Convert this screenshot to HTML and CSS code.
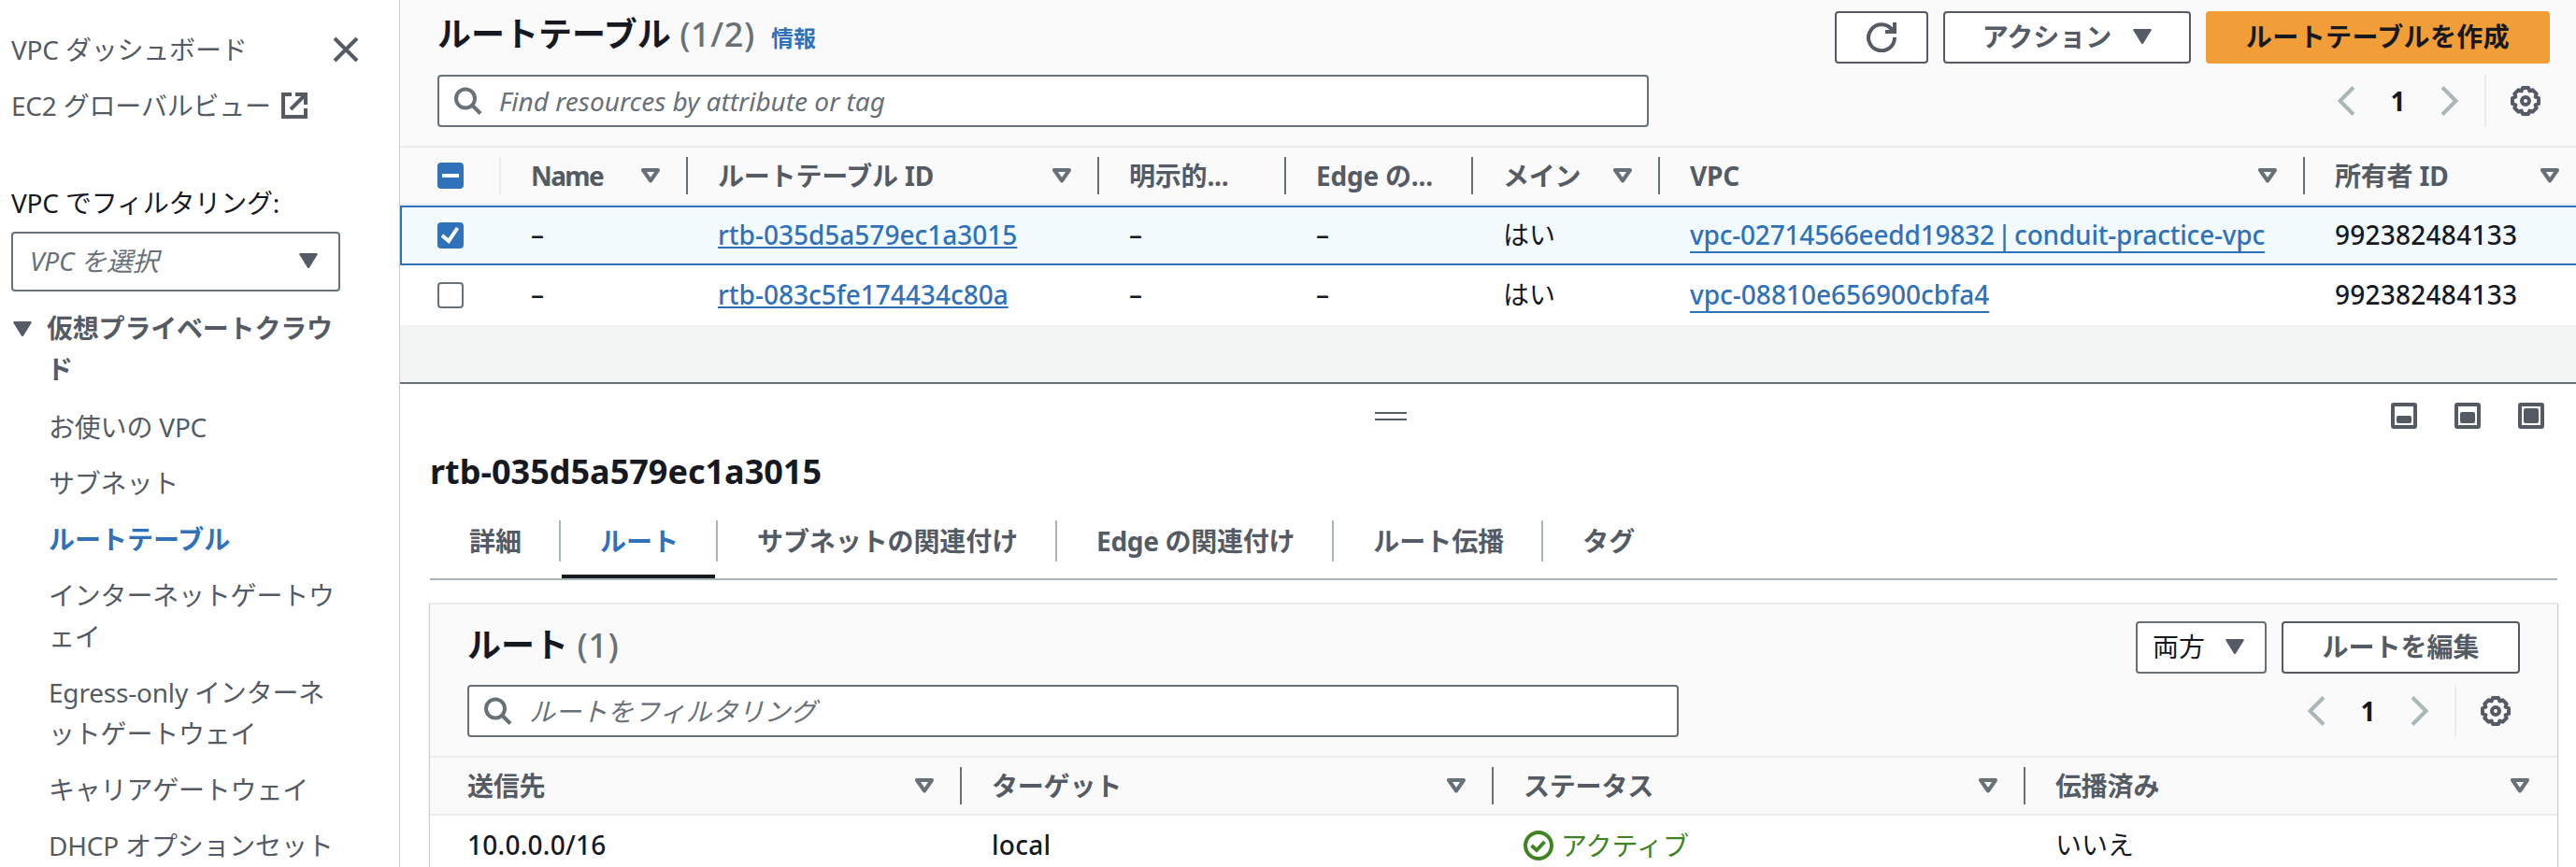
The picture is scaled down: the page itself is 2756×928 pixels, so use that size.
FILE: index.html
```html
<!DOCTYPE html>
<html lang="ja">
<head>
    <meta charset="utf-8">
    <title>ルートテーブル | VPC</title>
    <link rel="stylesheet" href="styles.css">
</head>
<body>
    <svg class="defs" width="0" height="0">
        <symbol id="i-down" viewBox="0 0 20 16"><path d="M1 0h18l1 1L11 15.4q-1 1.2-2 0L0 1z" fill="currentColor"/></symbol>
        <symbol id="i-sort" viewBox="0 0 20 16"><path d="M2 2h16l-8 11.5z" fill="none" stroke="currentColor" stroke-width="4" stroke-linejoin="round"/></symbol>
        <symbol id="i-search" viewBox="0 0 30 30"><circle cx="12" cy="12.500" r="10" fill="none" stroke="currentColor" stroke-width="4"/><path d="M19 19.500L28 28.500" stroke="currentColor" stroke-width="4"/></symbol>
        <symbol id="i-prev" viewBox="0 0 20 32"><path d="M18 1.500L3.500 16 18 30.500" fill="none" stroke="currentColor" stroke-width="4"/></symbol>
        <symbol id="i-next" viewBox="0 0 20 32"><path d="M2 1.500L16.500 16 2 30.500" fill="none" stroke="currentColor" stroke-width="4"/></symbol>
        <symbol id="i-gear" viewBox="0 0 32 32">
            <path d="M13 2h6l1.400 3.400 3.200-1.100 4.100 4.100-1.100 3.200L30 13v6l-3.400 1.400 1.100 3.200-4.100 4.100-3.200-1.100L19 30h-6l-1.400-3.400-3.200 1.100-4.100-4.100 1.100-3.200L2 19v-6l3.400-1.400-1.100-3.200 4.100-4.100 3.200 1.100z" fill="none" stroke="currentColor" stroke-width="4" stroke-linejoin="round"/>
            <circle cx="16" cy="16" r="4" fill="none" stroke="currentColor" stroke-width="4"/>
        </symbol>
    </svg>

    <nav class="sidebar">
        <div class="nav-top">
            <a class="nav-link">VPC ダッシュボード</a>
            <svg class="close" viewBox="0 0 28 28"><path d="M2 2l24 24M26 2L2 26" stroke="currentColor" stroke-width="4"/></svg>
        </div>
        <a class="nav-link">EC2 グローバルビュー
            <svg class="external" viewBox="0 0 28 28"><path d="M11 2H2v24h24V17M15 2h11v11M26 2L10 18" fill="none" stroke="currentColor" stroke-width="4"/></svg>
        </a>
        <div class="filter-label">VPC でフィルタリング:</div>
        <div class="select vpc-select"><i>VPC を選択</i><svg class="tri"><use href="#i-down"/></svg></div>
        <div class="nav-section"><svg class="tri"><use href="#i-down"/></svg><b>仮想プライベートクラウド</b></div>
        <ul class="nav-list">
            <li>お使いの VPC</li>
            <li>サブネット</li>
            <li class="active">ルートテーブル</li>
            <li>インターネットゲートウェイ</li>
            <li>Egress-only インターネットゲートウェイ</li>
            <li>キャリアゲートウェイ</li>
            <li>DHCP オプションセット</li>
        </ul>
    </nav>

    <main class="main">
        <!-- ルートテーブル一覧 -->
        <section class="list">
            <div class="title-row">
                <h1>ルートテーブル <span class="count">(1/2)</span> <a class="info">情報</a></h1>
                <div class="actions">
                    <button class="btn refresh"><svg viewBox="0 0 32 32"><path d="M30 0v10H20M28 9A14 14 0 1 0 30 16" fill="none" stroke="currentColor" stroke-width="4"/></svg></button>
                    <button class="btn menu">アクション <svg class="tri"><use href="#i-down"/></svg></button>
                    <button class="btn primary">ルートテーブルを作成</button>
                </div>
            </div>
            <div class="tools">
                <div class="search"><svg><use href="#i-search"/></svg><i>Find resources by attribute or tag</i></div>
                <div class="pager">
                    <svg class="arrow"><use href="#i-prev"/></svg><b>1</b><svg class="arrow"><use href="#i-next"/></svg>
                    <span class="settings"><svg><use href="#i-gear"/></svg></span>
                </div>
            </div>
            <div class="table tables-table">
                <div class="row head">
                    <div class="cell check"><span class="box on"><svg viewBox="0 0 28 28"><path d="M5 14h18" stroke="#fff" stroke-width="4"/></svg></span></div>
                    <div class="cell name">Name<svg class="sort"><use href="#i-sort"/></svg></div>
                    <div class="cell">ルートテーブル ID<svg class="sort"><use href="#i-sort"/></svg></div>
                    <div class="cell">明示的...</div>
                    <div class="cell">Edge の...</div>
                    <div class="cell">メイン<svg class="sort"><use href="#i-sort"/></svg></div>
                    <div class="cell">VPC<svg class="sort"><use href="#i-sort"/></svg></div>
                    <div class="cell">所有者 ID<svg class="sort"><use href="#i-sort"/></svg></div>
                </div>
                <div class="row selected">
                    <div class="cell check"><span class="box on"><svg viewBox="0 0 28 28"><path d="M5 14l7 6L21.500 6" fill="none" stroke="#fff" stroke-width="4"/></svg></span></div>
                    <div class="cell num">–</div>
                    <div class="cell"><a class="link">rtb-035d5a579ec1a3015</a></div>
                    <div class="cell num">–</div>
                    <div class="cell num">–</div>
                    <div class="cell">はい</div>
                    <div class="cell"><a class="link vpc named">vpc-02714566eedd19832 | conduit-practice-vpc</a></div>
                    <div class="cell num">992382484133</div>
                </div>
                <div class="row">
                    <div class="cell check"><span class="box"></span></div>
                    <div class="cell num">–</div>
                    <div class="cell"><a class="link">rtb-083c5fe174434c80a</a></div>
                    <div class="cell num">–</div>
                    <div class="cell num">–</div>
                    <div class="cell">はい</div>
                    <div class="cell"><a class="link vpc">vpc-08810e656900cbfa4</a></div>
                    <div class="cell num">992382484133</div>
                </div>
            </div>
        </section>

        <!-- 分割パネル -->
        <section class="panel">
            <div class="panel-bar">
                <span class="handle"></span>
                <div class="sizes">
                    <svg viewBox="0 0 28 28"><rect x="2" y="2" width="24" height="24" rx="1"/><rect class="fill" x="6" y="14" width="16" height="8" rx="2"/></svg>
                    <svg viewBox="0 0 28 28"><rect x="2" y="2" width="24" height="24" rx="1"/><rect class="fill" x="6" y="10" width="16" height="12" rx="2"/></svg>
                    <svg viewBox="0 0 28 28"><rect x="2" y="2" width="24" height="24" rx="1"/><rect class="fill" x="6" y="6" width="16" height="16" rx="2"/></svg>
                </div>
            </div>
            <h2>rtb-035d5a579ec1a3015</h2>
            <div class="tabs">
                <div class="tab">詳細</div>
                <div class="tab current">ルート</div>
                <div class="tab">サブネットの関連付け</div>
                <div class="tab">Edge の関連付け</div>
                <div class="tab">ルート伝播</div>
                <div class="tab">タグ</div>
            </div>
            <div class="card">
                <div class="title-row">
                    <h1>ルート <span class="count">(1)</span></h1>
                    <div class="actions">
                        <div class="select both">両方<svg class="tri"><use href="#i-down"/></svg></div>
                        <button class="btn edit">ルートを編集</button>
                    </div>
                </div>
                <div class="tools">
                    <div class="search"><svg><use href="#i-search"/></svg><i>ルートをフィルタリング</i></div>
                    <div class="pager">
                        <svg class="arrow"><use href="#i-prev"/></svg><b>1</b><svg class="arrow"><use href="#i-next"/></svg>
                        <span class="settings"><svg><use href="#i-gear"/></svg></span>
                    </div>
                </div>
                <div class="table routes-table">
                    <div class="row head">
                        <div class="cell">送信先<svg class="sort"><use href="#i-sort"/></svg></div>
                        <div class="cell">ターゲット<svg class="sort"><use href="#i-sort"/></svg></div>
                        <div class="cell">ステータス<svg class="sort"><use href="#i-sort"/></svg></div>
                        <div class="cell">伝播済み<svg class="sort"><use href="#i-sort"/></svg></div>
                    </div>
                    <div class="row">
                        <div class="cell num">10.0.0.0/16</div>
                        <div class="cell num">local</div>
                        <div class="cell status"><svg viewBox="0 0 32 32"><circle cx="16" cy="16" r="14" fill="none" stroke="currentColor" stroke-width="4"/><path d="M8.500 16l5.500 5 8.500-9" fill="none" stroke="currentColor" stroke-width="4"/></svg>アクティブ</div>
                        <div class="cell">いいえ</div>
                    </div>
                </div>
            </div>
        </section>
    </main>
</body>
</html>
```

FILE: styles.css
```css
* {
    box-sizing: border-box;
}
body {
    margin: 0;
    height: 928px;
    overflow: hidden;
    display: flex;
    font-family: "Noto Sans", "Noto Sans CJK JP", sans-serif;
    font-size: 28px;
    line-height: 44px;
    color: #16191f;
    background: #fff;
}
.defs {
    position: absolute;
}
svg {
    display: block;
    flex: none;
}
.tri, .sort {
    width: 20px;
    height: 16px;
    color: #545b64;
}

/* サイドバー */
.sidebar {
    width: 428px;
    flex: none;
    padding: 31px 64px 0 12px;
    color: #545b64;
    letter-spacing: -0.2px;
}
.nav-top {
    display: flex;
    justify-content: space-between;
    align-items: center;
    margin-right: -20px;
    margin-bottom: 16px;
}
.close {
    width: 28px;
    height: 28px;
}
.nav-link {
    display: flex;
    align-items: center;
    white-space: nowrap;
}
.external {
    width: 28px;
    height: 28px;
    margin-left: 11px;
}
.filter-label {
    margin-top: 60px;
    color: #16191f;
}
.select {
    display: flex;
    align-items: center;
    justify-content: space-between;
    border: 2px solid #687078;
    border-radius: 4px;
    background: #fff;
}
.vpc-select {
    height: 64px;
    margin-top: 9px;
    padding: 0 22px 2px 18px;
    color: #687078;
}
.nav-section {
    display: flex;
    margin-top: 17px;
    padding-left: 2px;
}
.nav-section .tri {
    margin: 15px 16px 0 0;
}
.nav-list {
    list-style: none;
    margin: 18px 0 0;
    padding: 0 0 0 40px;
}
.nav-list li {
    margin-bottom: 16px;
    margin-right: -10px;
}
.nav-list .active {
    color: #2f72b9;
    font-weight: bold;
    letter-spacing: 0;
}

/* 一覧 */
.main {
    flex: 1;
    min-width: 0;
    display: flex;
    flex-direction: column;
    background: #f2f3f3;
    box-shadow: 0 0 0 1px #c8d0d0;
}
.list {
    background: #fafafa;
    padding-top: 12px;
}
.title-row, .tools {
    display: flex;
    justify-content: space-between;
    padding: 0 28px 0 40px;
}
h1 {
    margin: 0;
    font-size: 36px;
    line-height: 50px;
}
.count {
    font-weight: 500;
    letter-spacing: 0.6px;
    color: #687078;
}
.info {
    margin-left: 8px;
    font-size: 24px;
    color: #2f72b9;
}
.actions {
    display: flex;
    gap: 16px;
}
.btn {
    display: flex;
    align-items: center;
    justify-content: center;
    height: 56px;
    padding: 0 0 2px;
    border: 2px solid #545b64;
    border-radius: 4px;
    background: #fff;
    color: #545b64;
    font: bold 28px/44px "Noto Sans", "Noto Sans CJK JP", sans-serif;
}
.refresh {
    width: 100px;
    padding: 0;
}
.refresh svg {
    width: 32px;
    height: 32px;
}
.menu {
    width: 265px;
    gap: 23px;
}
.primary {
    width: 368px;
    border-color: #f19e38;
    background: #f19e38;
    color: #16191f;
    letter-spacing: 0.4px;
}
.tools {
    margin-top: 12px;
    padding-bottom: 20px;
}
.search {
    display: flex;
    align-items: center;
    width: 1296px;
    height: 56px;
    padding: 0 16px;
    gap: 18px;
    border: 2px solid #687078;
    border-radius: 4px;
    background: #fff;
    color: #687078;
}
.search svg {
    width: 30px;
    height: 30px;
}
.pager {
    display: flex;
    align-items: center;
}
.arrow {
    width: 20px;
    height: 32px;
    color: #aab7b8;
}
.pager b {
    width: 91px;
    text-align: center;
}
.settings {
    display: flex;
    align-items: center;
    height: 56px;
    margin-left: 27px;
    padding: 0 10px 0 26px;
    border-left: 2px solid #eaeded;
    color: #545b64;
}
.settings svg {
    width: 32px;
    height: 32px;
}

/* テーブル */
.row {
    display: grid;
    height: 64px;
    background: #fff;
}
.tables-table .row {
    grid-template-columns: 108px 200px 440px 200px 200px 200px 690px 1fr;
}
.routes-table .row {
    grid-template-columns: repeat(4, 1fr);
}
.row.head {
    background: #fafafa;
    border-top: 2px solid #eaeded;
    border-bottom: 2px solid #eaeded;
    color: #545b64;
    font-weight: bold;
    letter-spacing: -0.2px;
}
.row.selected {
    background: #f2fafe;
    border: 2px solid #2f72b9;
    border-right: none;
}
.row.selected .check {
    padding-left: 38px;
}
.tables-table .row.selected {
    grid-template-columns: 106px 200px 440px 200px 200px 200px 690px 1fr;
}
.cell {
    display: flex;
    align-items: center;
    padding: 0 0 2px 32px;
    white-space: nowrap;
}
.check, .routes-table .cell:first-child {
    padding-left: 40px;
}
.check, .head .cell, .cell.status {
    padding-bottom: 0;
}
.num {
    font-weight: 500;
    letter-spacing: 0.25px;
}
.head .cell {
    justify-content: space-between;
    height: 40px;
    margin-top: 10px;
    padding-right: 28px;
    border-right: 2px solid #687078;
}
.head .name {
    letter-spacing: -1.6px;
}
.head .check {
    border-color: #eaeded;
}
.head .cell:last-child {
    padding-right: 18px;
    border-right: none;
}
.routes-table .head .cell:last-child {
    padding-right: 30px;
}
.sort {
    color: #687078;
}
.box {
    width: 28px;
    height: 28px;
    border: 2px solid #687078;
    border-radius: 4px;
    background: #fff;
}
.box.on {
    border: none;
    background: #2f72b9;
}
.link {
    color: #2f72b9;
    font-weight: 500;
    text-decoration: underline;
    text-decoration-thickness: 2px;
    text-decoration-skip-ink: none;
    text-underline-offset: 2px;
}
.link.vpc {
    text-underline-offset: 7px;
}
.link.named {
    letter-spacing: -0.2px;
    word-spacing: -4px;
}
.status {
    color: #3f8420;
    gap: 8px;
}
.status svg {
    width: 32px;
    height: 32px;
}

/* 下のパネル */
.panel {
    flex: 1;
    margin-top: 61px;
    padding: 0 20px 0 32px;
    border-top: 2px solid #687078;
    background: #fff;
}
.panel-bar {
    display: grid;
    grid-template-columns: 1011px 34px 1fr;
    padding: 20px 14px 0 0;
}
.handle {
    grid-column: 2;
    height: 9px;
    margin-top: 10px;
    border-top: 2px solid #545b64;
    border-bottom: 2px solid #545b64;
}
.sizes {
    display: flex;
    justify-content: flex-end;
    gap: 40px;
}
.sizes svg {
    width: 28px;
    height: 28px;
    fill: none;
    stroke: #545b64;
    stroke-width: 4px;
}
.sizes .fill {
    fill: #545b64;
    stroke: none;
}
h2 {
    margin: 21px 0 0;
    font-size: 36px;
    line-height: 50px;
}
.tabs {
    display: flex;
    height: 64px;
    margin-top: 27px;
    border-bottom: 2px solid #aab7b8;
    color: #545b64;
    font-weight: bold;
}
.tab {
    position: relative;
    height: 44px;
    padding: 0 40px 0 42px;
    border-right: 2px solid #aab7b8;
}
.tab:last-child {
    border: none;
}
.tab:nth-child(3) {
    letter-spacing: -0.1px;
}
.tab:nth-child(4) {
    letter-spacing: -0.3px;
}
.current {
    color: #2f72b9;
}
.current::after {
    content: "";
    position: absolute;
    left: 1px;
    right: 1px;
    top: 58px;
    height: 4px;
    background: #16191f;
}
.card {
    height: 320px;
    margin-top: 24px;
    padding-top: 18px;
    border-top: 2px solid #eaeded;
    background: #fafafa;
    box-shadow: -1px 1px 1px #c5cdcd, 1px 1px 1px #c5cdcd;
}
.card .title-row, .card .tools {
    padding-left: 40px;
    padding-right: 40px;
}
.card h1 {
    line-height: 52px;
}
.both {
    width: 140px;
    height: 56px;
    padding: 0 22px 2px 16px;
}
.edit {
    width: 255px;
}
```
